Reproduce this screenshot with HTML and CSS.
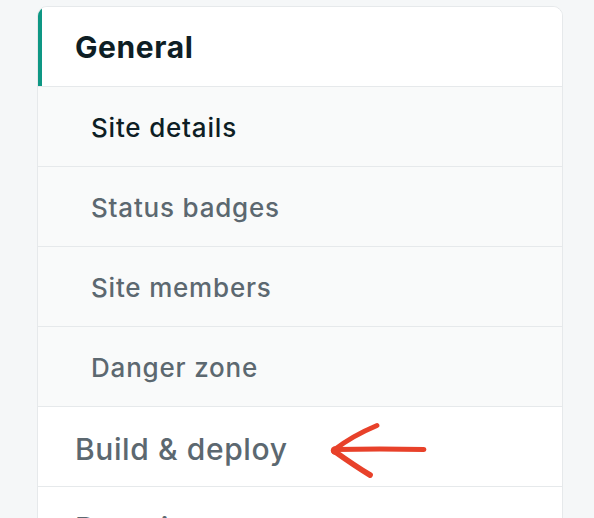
FILE: index.html
```html
<!DOCTYPE html>
<html lang="en">
<head>
<meta charset="utf-8">
<title>Site settings</title>
<link rel="stylesheet" href="styles.css">
</head>
<body>
<div class="page">
  <nav class="card">
    <div class="item top active">General</div>
    <div class="item sub current">Site details</div>
    <div class="item sub">Status badges</div>
    <div class="item sub">Site members</div>
    <div class="item sub">Danger zone</div>
    <div class="item top">Build &amp; deploy</div>
    <div class="item top last">Domain management</div>
  </nav>
  <svg class="arrow" width="594" height="518" viewBox="0 0 594 518">
    <path d="M335 449.5 Q380 448.5 424 449.5" fill="none" stroke="#e8412a" stroke-width="4.8" stroke-linecap="round"/>
    <path d="M334 450 Q352 436 377 425.5" fill="none" stroke="#e8412a" stroke-width="4.8" stroke-linecap="round"/>
    <path d="M334 451 Q355 466 370 475" fill="none" stroke="#e8412a" stroke-width="5.8" stroke-linecap="round"/>
    <circle cx="335" cy="450.5" r="4.2" fill="#e8412a"/>
  </svg>
</div>
</body>
</html>
```
FILE: styles.css
```css
html, body {
  margin: 0;
  padding: 0;
  background: #f5f7f8;
}
.page {
  position: relative;
  width: 594px;
  height: 518px;
  overflow: hidden;
  font-family: Inter, "Noto Sans", "Liberation Sans", sans-serif;
}
.card {
  margin: 6px 0 0 37px;
  width: 524px;
  background: #fff;
  border: 1px solid #e6e9eb;
  border-radius: 10px 10px 0 0;
  overflow: hidden;
}
.item {
  display: flex;
  align-items: center;
  border-bottom: 1px solid #e6e9eb;
  box-sizing: content-box;
  position: relative;
  white-space: nowrap;
}
.top {
  height: 75px;
  padding: 4px 0 0 37px;
  font-size: 30px;
  letter-spacing: 0.6px;
  font-weight: 500;
  color: #5c6870;
  background: #fff;
}
.top.active {
  height: 79px;
  padding-top: 0;
  font-weight: 700;
  color: #0e1e25;
}
.top.last {
  height: 77px;
  padding-top: 2px;
}
.top.active::before {
  content: "";
  position: absolute;
  left: 0;
  top: 0;
  bottom: 0;
  width: 4px;
  background: #0e9784;
}
.sub {
  height: 77px;
  padding: 2px 0 0 53px;
  font-size: 26px;
  letter-spacing: 0.8px;
  font-weight: 500;
  color: #5c6870;
  background: #f9fafa;
}
.sub.current {
  color: #0e1e25;
}
.arrow {
  position: absolute;
  left: 0;
  top: 0;
  pointer-events: none;
}
```
